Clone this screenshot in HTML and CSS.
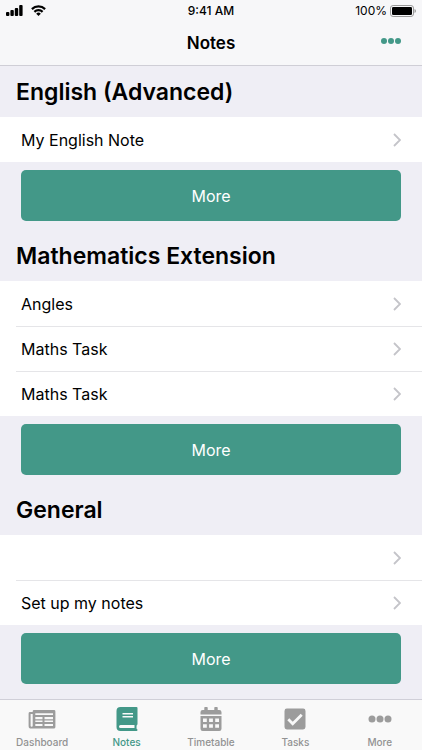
FILE: index.html
```html
<!DOCTYPE html>
<html lang="en">
<head>
<meta charset="utf-8">
<meta name="viewport" content="width=device-width, initial-scale=1">
<title>Notes</title>
<link rel="stylesheet" href="styles.css">
</head>
<body>
<svg class="sprite" aria-hidden="true">
  <symbol id="chevron" viewBox="0 0 8 14"><path d="M1 1l6 6-6 6" fill="none" stroke="currentColor" stroke-width="1.8"/></symbol>
</svg>
<header class="header">
  <div class="status">
    <div class="status-left">
      <svg width="17" height="11" viewBox="0 0 17 11" aria-hidden="true"><rect x="0" y="7" width="3.400" height="4" rx="1"/><rect x="4.400" y="5" width="3.400" height="6" rx="1"/><rect x="8.800" y="3" width="3.400" height="8" rx="1"/><rect x="13.200" y="0" width="3.400" height="11" rx="1"/></svg>
      <svg width="15" height="11" viewBox="0 0 15 11" aria-hidden="true"><g fill="none" stroke="#000" stroke-width="2.200"><path d="M.9 4.100a9.400 9.400 0 0 1 13.200 0"/><path d="M3.400 6.900a5.800 5.800 0 0 1 8.200 0"/></g><path d="M5.200 8.800a3.200 3.200 0 0 1 4.600 0L7.500 11z"/></svg>
    </div>
    <span class="time">9:41 AM</span>
    <div class="status-right">
      <span>100%</span>
      <svg width="26" height="12" viewBox="0 0 26 12" aria-hidden="true"><rect x=".5" y=".5" width="23" height="11" rx="2.6" fill="none" stroke="#999"/><rect x="2" y="2" width="20" height="8" rx="1.3"/><path d="M24.500 4q1.500.5 1.500 2t-1.500 2z" fill="#999"/></svg>
    </div>
  </div>
  <div class="navbar">
    <h1 class="title">Notes</h1>
    <button class="menu" type="button" aria-label="Options"><svg width="20" height="6" viewBox="0 0 20 6"><circle cx="3" cy="3" r="3"/><circle cx="10" cy="3" r="3"/><circle cx="17" cy="3" r="3"/></svg></button>
  </div>
</header>
<main class="content">
  <section class="group">
    <h2>English (Advanced)</h2>
    <ul>
      <li><a href="#">My English Note<svg class="chevron"><use href="#chevron"/></svg></a></li>
    </ul>
    <button class="more" type="button">More</button>
  </section>
  <section class="group">
    <h2>Mathematics Extension</h2>
    <ul>
      <li><a href="#">Angles<svg class="chevron"><use href="#chevron"/></svg></a></li>
      <li><a href="#">Maths Task<svg class="chevron"><use href="#chevron"/></svg></a></li>
      <li><a href="#">Maths Task<svg class="chevron"><use href="#chevron"/></svg></a></li>
    </ul>
    <button class="more" type="button">More</button>
  </section>
  <section class="group">
    <h2>General</h2>
    <ul>
      <li><a href="#" aria-label="Untitled note"><svg class="chevron"><use href="#chevron"/></svg></a></li>
      <li><a href="#">Set up my notes<svg class="chevron"><use href="#chevron"/></svg></a></li>
    </ul>
    <button class="more" type="button">More</button>
  </section>
</main>
<nav class="tabs">
  <a href="#">
    <svg width="28" height="24" viewBox="0 0 28 24"><path fill-rule="evenodd" d="M6 3H26a1.400 1.400 0 0 1 1.400 1.400V20a1.600 1.600 0 0 1-1.600 1.600H3.200A2.600 2.600 0 0 1 .6 19V6.400A1.400 1.400 0 0 1 2 5H4.700V4.300A1.300 1.300 0 0 1 6 3zM2.600 7V18.700a1 1 0 0 0 2.100 0V7zM7.300 6.300V8H25V6.300zM7.300 10V12.200H14.500V10zM16.500 10V12.200H25V10zM7.300 13.500V15H14.500V13.500zM16.500 13.500V15H25V13.500zM7.300 17V19H14.500V17zM16.500 17V19H25V17z"/></svg>
    <span>Dashboard</span>
  </a>
  <a class="active" href="#" aria-current="page">
    <svg width="22" height="24" viewBox="0 0 22 24"><path fill-rule="evenodd" d="M4.500 0H20.500a1 1 0 0 1 1 1V17a1.200 1.200 0 0 1-.8 1.200q-.4 1.900 0 3.700.8.2.8 1a1 1 0 0 1-1 1.100H4.500A4 4 0 0 1 .5 20V4A4 4 0 0 1 4.500 0zM6.500 6V7.500H17V6zM6.500 9V10.500H17V9zM4.500 18a1.500 1.500 0 0 0 0 3H18.500V18z"/></svg>
    <span>Notes</span>
  </a>
  <a href="#">
    <svg width="22" height="24" viewBox="0 0 22 24"><path fill-rule="evenodd" d="M5 0H7a.7.7 0 0 1 .7.7V3H14.300V.7A.7.7 0 0 1 15 0H17a.7.7 0 0 1 .7.7V3H19.300A2.200 2.200 0 0 1 21.500 5.200V7.500H.5V5.200A2.200 2.200 0 0 1 2.700 3H4.300V.7A.7.7 0 0 1 5 0zM.5 9H21.500V21.800A2.200 2.200 0 0 1 19.300 24H2.700A2.200 2.200 0 0 1 .5 21.800zM3 11.500V15H6.800V11.500zM9.100 11.500V15H12.900V11.500zM15.200 11.500V15H19V11.500zM3 17.200V20.700H6.800V17.200zM9.100 17.200V20.700H12.900V17.200zM15.200 17.200V20.700H19V17.200z"/></svg>
    <span>Timetable</span>
  </a>
  <a href="#">
    <svg width="22" height="24" viewBox="0 0 22 24"><rect x=".5" y="1.500" width="21" height="21" rx="2.400"/><path d="M4.300 12.300l4.400 4.400 9-9" fill="none" stroke="#f9f9f9" stroke-width="2.800"/></svg>
    <span>Tasks</span>
  </a>
  <a href="#">
    <svg width="24" height="24" viewBox="0 0 24 24"><circle cx="4" cy="12" r="3.500"/><circle cx="12" cy="12" r="3.500"/><circle cx="20" cy="12" r="3.500"/></svg>
    <span>More</span>
  </a>
</nav>
</body>
</html>
```
FILE: styles.css
```css
* { box-sizing: border-box; }
body {
  margin: 0;
  min-height: 100vh;
  display: flex;
  flex-direction: column;
  background: #efeef5;
  color: #000;
  font-family: Inter, "Liberation Sans", sans-serif;
}
h1, h2, ul { margin: 0; padding: 0; }
ul { list-style: none; }
a { color: inherit; text-decoration: none; }
button { font: inherit; border: 0; cursor: pointer; }
.sprite { position: absolute; width: 0; height: 0; }
.header {
  background: #f7f7f9;
  border-bottom: 1px solid #cfced6;
}
.status {
  display: grid;
  grid-template-columns: 1fr auto 1fr;
  align-items: center;
  height: 21px;
  padding: 0 6px;
  font-size: 12px;
  line-height: 16px;
}
.status-left { display: flex; gap: 8px; }
.status-right { display: flex; align-items: center; justify-content: flex-end; gap: 3px; }
.time { font-weight: 500; }
.navbar {
  display: grid;
  grid-template-columns: 1fr auto 1fr;
  align-items: center;
  height: 44px;
  padding: 0 21px;
}
.title { grid-column: 2; font-size: 17px; line-height: 24px; font-weight: 600; }
.menu {
  display: flex;
  justify-self: end;
  padding: 0 0 4px;
  background: none;
  fill: #439888;
}
.content { flex: 1; }
.group { margin-bottom: 9px; }
.group h2 {
  padding: 10px 16px 9px;
  font-size: 23px;
  line-height: 32px;
  font-weight: 600;
}
.group ul { background: #fff; }
.group li { padding-left: 16px; }
.group li + li a { border-top: 1px solid #e5e5e8; }
.group a {
  display: flex;
  align-items: center;
  height: 45px;
  padding: 0 21px 0 5px;
  font-size: 16px;
  line-height: 24px;
}
.chevron {
  width: 8px;
  height: 14px;
  margin-left: auto;
  color: #c4c4c9;
}
.more {
  display: block;
  width: calc(100% - 42px);
  height: 51px;
  margin: 8px 21px 0;
  border-radius: 5px;
  background: #439888;
  color: #fff;
  font-size: 16px;
}
.tabs {
  position: sticky;
  bottom: 0;
  display: grid;
  grid-template-columns: repeat(5, 1fr);
  height: 51px;
  border-top: 1px solid #d0cfd8;
  background: #f9f9f9;
  color: #929292;
  fill: #9c9c9c;
}
.tabs a {
  display: flex;
  flex-direction: column;
  align-items: center;
  gap: 4px;
  padding-top: 7px;
  font-size: 10px;
  line-height: 14px;
  font-weight: 500;
}
.tabs .active { color: #439888; fill: #439888; }
```
